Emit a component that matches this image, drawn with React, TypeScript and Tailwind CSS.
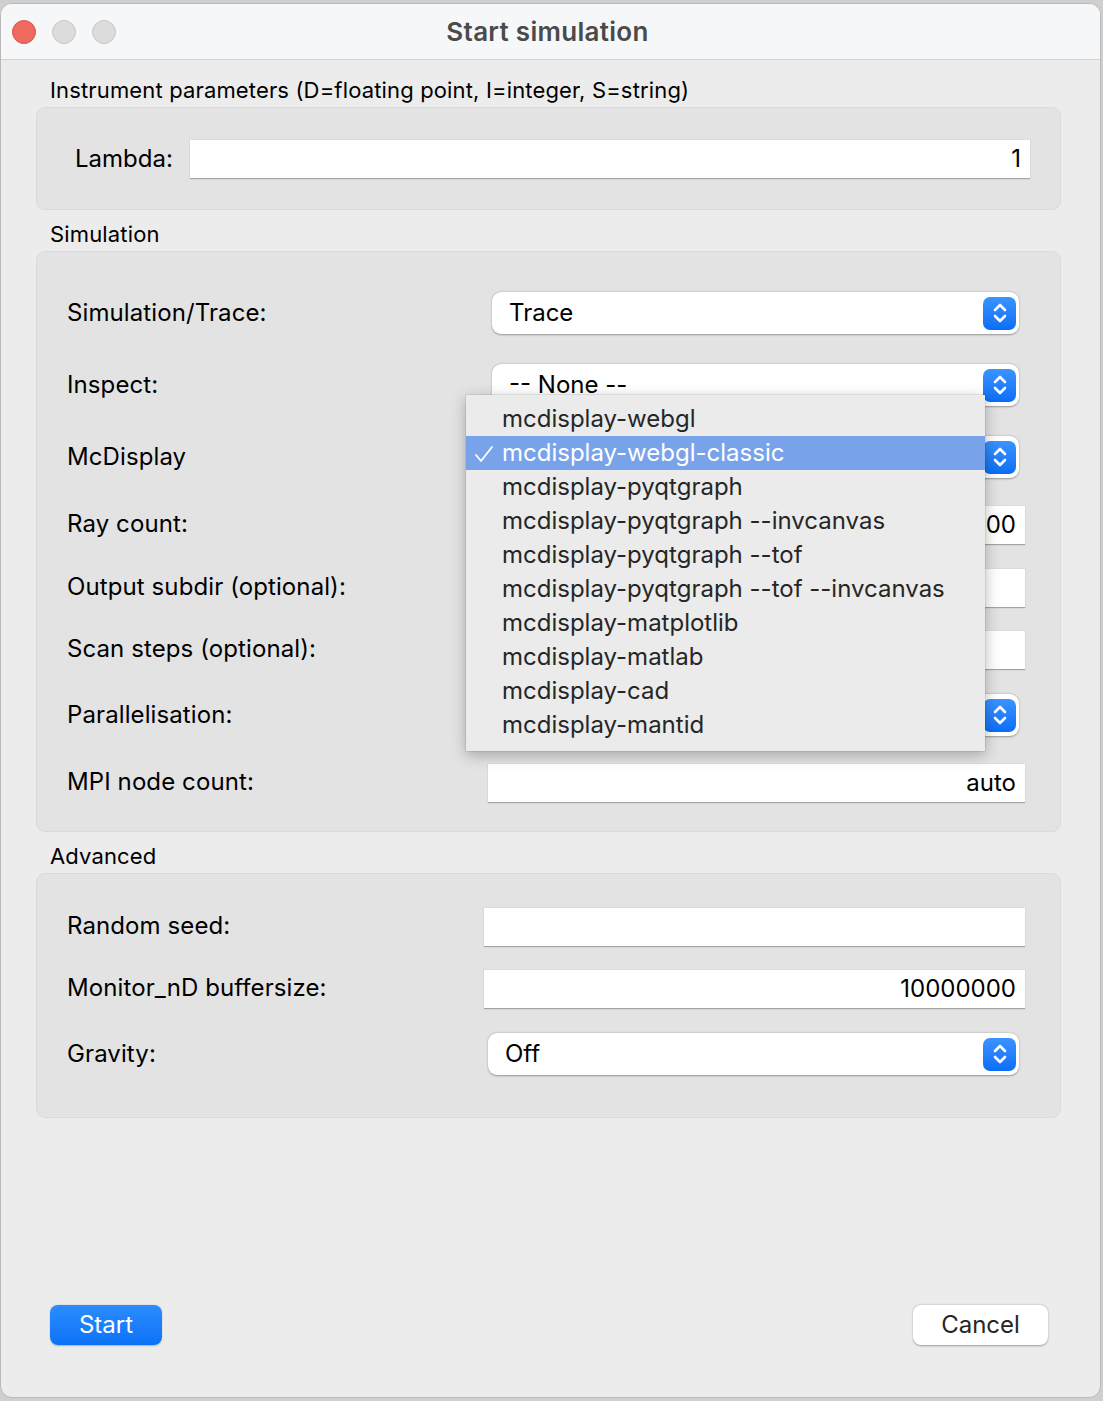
import React from "react";

const font = { fontFamily: "Inter, 'Noto Sans', sans-serif" };

function Stepper() {
  return (
    <div className="flex h-[33px] w-[33px] items-center justify-center rounded-[7px] bg-gradient-to-b from-[#3a93ff] to-[#0a6ef6]">
      <svg width="18" height="26" viewBox="0 0 18 26" fill="none">
        <path d="M4 10 L9 5 L14 10" stroke="white" strokeWidth="2.6" strokeLinecap="round" strokeLinejoin="round" />
        <path d="M4 16 L9 21 L14 16" stroke="white" strokeWidth="2.6" strokeLinecap="round" strokeLinejoin="round" />
      </svg>
    </div>
  );
}

function Select({ value, className }: { value: string; className: string }) {
  return (
    <div
      className={`flex h-[42px] items-center justify-between rounded-[9px] bg-white pl-[17px] pr-[3px] shadow-[0_0.5px_2px_rgba(0,0,0,0.35)] ${className}`}
    >
      <span className="text-[24px] text-black">{value}</span>
      <Stepper />
    </div>
  );
}

function Input({ value, className }: { value: string; className: string }) {
  return (
    <div
      className={`flex h-[39px] items-center justify-end bg-white pr-[9px] shadow-[0_1px_1px_rgba(0,0,0,0.28)] border-t border-[#dcdcdc] ${className}`}
    >
      <span className="text-[24px] text-black">{value}</span>
    </div>
  );
}

function Row({ label, h, children }: { label: string; h: string; children?: React.ReactNode }) {
  return (
    <div className={`flex items-center ${h}`}>
      <div className="w-[417px] shrink-0 pl-[30px] text-[24px] tracking-[0.1px] text-black">{label}</div>
      {children}
    </div>
  );
}

const items = [
  "mcdisplay-webgl",
  "mcdisplay-webgl-classic",
  "mcdisplay-pyqtgraph",
  "mcdisplay-pyqtgraph --invcanvas",
  "mcdisplay-pyqtgraph --tof",
  "mcdisplay-pyqtgraph --tof --invcanvas",
  "mcdisplay-matplotlib",
  "mcdisplay-matlab",
  "mcdisplay-cad",
  "mcdisplay-mantid",
];

export default function App() {
  return (
    <div className="relative h-[1401px] w-[1103px] overflow-hidden bg-[#cfcfcf]" style={font}>
      <div className="relative mt-[3px] flex h-[1395px] w-[1101px] flex-col overflow-hidden rounded-[12px] border border-[#b9b9b9] bg-[#ececec]">
        {/* title bar */}
        <div className="relative flex h-[56px] shrink-0 items-center border-b border-[#d3d3d3] bg-[#f6f7f9]">
          <div className="flex gap-[16px] pl-[11px]">
            <div className="h-[24px] w-[24px] rounded-full border border-[#d9564b] bg-[#ee6a5e]" />
            <div className="h-[24px] w-[24px] rounded-full border border-[#c8c8c8] bg-[#dcdcdd]" />
            <div className="h-[24px] w-[24px] rounded-full border border-[#c8c8c8] bg-[#dcdcdd]" />
          </div>
          <div className="absolute inset-0 flex items-center justify-center pr-[6px] text-[26px] font-semibold tracking-[0.3px] text-[#4a4a4a]">
            Start simulation
          </div>
        </div>

        {/* body */}
        <div className="flex flex-1 flex-col pl-[35px] pr-[39px]">
          <div className="mt-[16px] h-[28px] pl-[14px] text-[22px] leading-[28px] tracking-[0.15px] text-black">
            Instrument parameters (D=floating point, I=integer, S=string)
          </div>
          <div className="mt-[3px] flex h-[103px] items-center rounded-[9px] border border-[#dadada] bg-[#e3e3e3] pl-[38px] pr-[30px]">
            <span className="w-[115px] shrink-0 text-[24px] text-black">Lambda:</span>
            <Input value="1" className="flex-1" />
          </div>

          <div className="mt-[10px] h-[28px] pl-[14px] text-[22px] leading-[28px] tracking-[0.15px] text-black">Simulation</div>
          <div className="mt-[3px] flex h-[581px] flex-col rounded-[9px] border border-[#dadada] bg-[#e3e3e3] pt-[25px]">
            <Row label="Simulation/Trace:" h="h-[72px]">
              <Select value="Trace" className="ml-[38px] w-[527px]" />
            </Row>
            <Row label="Inspect:" h="h-[72px]">
              <Select value="-- None --" className="ml-[38px] w-[527px]" />
            </Row>
            <Row label="McDisplay" h="h-[72px]">
              <Select value="" className="ml-[38px] w-[527px]" />
            </Row>
            <Row label="Ray count:" h="h-[62px]">
              <Input value="1000000" className="ml-[34px] w-[537px]" />
            </Row>
            <Row label="Output subdir (optional):" h="h-[64px]">
              <Input value="" className="ml-[34px] w-[537px]" />
            </Row>
            <Row label="Scan steps (optional):" h="h-[60px]">
              <Input value="" className="ml-[34px] w-[537px]" />
            </Row>
            <Row label="Parallelisation:" h="h-[72px]">
              <Select value="" className="ml-[38px] w-[527px]" />
            </Row>
            <Row label="MPI node count:" h="h-[62px]">
              <Input value="auto" className="ml-[34px] w-[537px]" />
            </Row>
          </div>

          <div className="mt-[10px] h-[28px] pl-[14px] text-[22px] leading-[28px] tracking-[0.15px] text-black">Advanced</div>
          <div className="mt-[3px] flex h-[245px] flex-col rounded-[9px] border border-[#dadada] bg-[#e3e3e3] pt-[22px]">
            <Row label="Random seed:" h="h-[60px]">
              <Input value="" className="ml-[30px] w-[541px]" />
            </Row>
            <Row label="Monitor_nD buffersize:" h="h-[64px]">
              <Input value="10000000" className="ml-[30px] w-[541px]" />
            </Row>
            <Row label="Gravity:" h="h-[68px]">
              <Select value="Off" className="ml-[34px] w-[531px]" />
            </Row>
          </div>

          <div className="flex-1" />
          <div className="flex items-center justify-between pb-[52px] pl-[14px] pr-[13px]">
            <div className="flex h-[40px] w-[112px] items-center justify-center rounded-[8px] bg-gradient-to-b from-[#2b8cff] to-[#0a72f7] text-[24px] text-white shadow-[0_0.5px_1.5px_rgba(0,0,0,0.25)]">
              Start
            </div>
            <div className="flex h-[40px] w-[135px] items-center justify-center rounded-[8px] bg-white text-[24px] text-[#262626] shadow-[0_0.5px_2px_rgba(0,0,0,0.35)]">
              Cancel
            </div>
          </div>
        </div>

        {/* dropdown overlay */}
        <div className="absolute left-[465px] top-[391px] w-[519px] bg-[#ebebeb] pb-[9px] pt-[7px] shadow-[0_4px_14px_rgba(0,0,0,0.28),0_0_0_0.5px_rgba(0,0,0,0.15)]">
          {items.map((it, i) => {
            const sel = i === 1;
            return (
              <div
                key={it}
                className={`relative flex h-[34px] items-center pl-[36px] text-[24px] ${
                  sel ? "bg-[#78a3ea] text-white" : "text-[#262626]"
                }`}
              >
                {sel && (
                  <svg className="absolute left-[8px] top-[9px]" width="20" height="18" viewBox="0 0 20 18" fill="none">
                    <path d="M2 10 L7 16 L18 2" stroke="white" strokeWidth="1.8" strokeLinecap="round" strokeLinejoin="round" />
                  </svg>
                )}
                {it}
              </div>
            );
          })}
        </div>
      </div>
    </div>
  );
}
